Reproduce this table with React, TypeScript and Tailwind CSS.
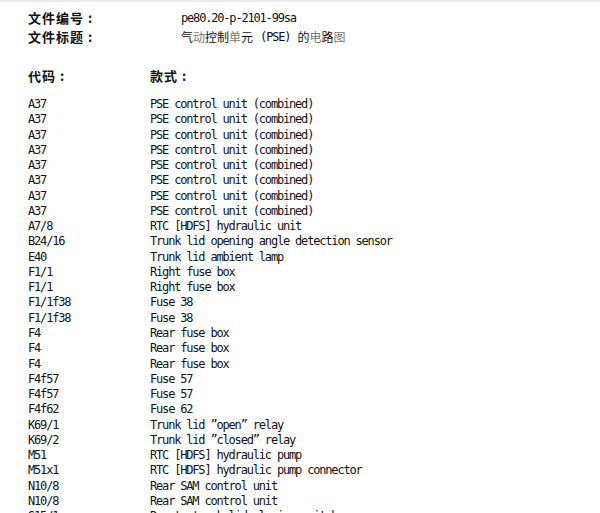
import React from "react";

const rows: [string, string][] = [
  ["A37", "PSE control unit (combined)"],
  ["A37", "PSE control unit (combined)"],
  ["A37", "PSE control unit (combined)"],
  ["A37", "PSE control unit (combined)"],
  ["A37", "PSE control unit (combined)"],
  ["A37", "PSE control unit (combined)"],
  ["A37", "PSE control unit (combined)"],
  ["A37", "PSE control unit (combined)"],
  ["A7/8", "RTC [HDFS] hydraulic unit"],
  ["B24/16", "Trunk lid opening angle detection sensor"],
  ["E40", "Trunk lid ambient lamp"],
  ["F1/1", "Right fuse box"],
  ["F1/1", "Right fuse box"],
  ["F1/1f38", "Fuse 38"],
  ["F1/1f38", "Fuse 38"],
  ["F4", "Rear fuse box"],
  ["F4", "Rear fuse box"],
  ["F4", "Rear fuse box"],
  ["F4f57", "Fuse 57"],
  ["F4f57", "Fuse 57"],
  ["F4f62", "Fuse 62"],
  ["K69/1", "Trunk lid \u201Dopen\u201D relay"],
  ["K69/2", "Trunk lid \u201Dclosed\u201D relay"],
  ["M51", "RTC [HDFS] hydraulic pump"],
  ["M51x1", "RTC [HDFS] hydraulic pump connector"],
  ["N10/8", "Rear SAM control unit"],
  ["N10/8", "Rear SAM control unit"],
  ["S15/1", "Remote trunk lid closing switch"],
];

const mono = "font-['DejaVu_Sans_Mono',monospace] text-[12px] tracking-[-1.18px]";
const cjk = "font-['Noto_Sans_CJK_SC','Noto_Sans',sans-serif]";

export default function App() {
  return (
    <div className="w-[600px] h-[513px] overflow-hidden bg-white text-[#111]">
      <div className="h-[2px] bg-[#e9e9e9]" />
      <div className="pl-[28px] pt-[6px]">
        <div className="flex items-center h-[19px]">
          <div className={`w-[153px] ${cjk} text-[13px] font-bold tracking-[1px]`}>文件编号 :</div>
          <div className={mono}>pe80.20-p-2101-99sa</div>
        </div>
        <div className="flex items-center h-[19px]">
          <div className={`w-[153px] ${cjk} text-[13px] font-bold tracking-[1px]`}>文件标题 :</div>
          <div className={`${cjk} text-[12px] flex items-center`}>
            <span>气</span>
            <span className="text-[#777]">动</span>
            <span>控制</span>
            <span className="text-[#777]">单</span>
            <span>元</span>
            <span className={`${mono} whitespace-pre ml-[1px]`}> (PSE) </span>
            <span className="ml-[1px]">的</span>
            <span className="text-[#777]">电</span>
            <span>路</span>
            <span className="text-[#777]">图</span>
          </div>
        </div>
        <div className="flex items-center h-[19px] mt-[20px]">
          <div className={`w-[122px] ${cjk} text-[13px] font-bold tracking-[1px]`}>代码 :</div>
          <div className={`${cjk} text-[13px] font-bold tracking-[1px]`}>款式 :</div>
        </div>
        <div className="mt-[12px]">
          {rows.map(([code, desc], i) => (
            <div key={i} className={`flex h-[15.27px] leading-[15.27px] ${mono} whitespace-pre`}>
              <div className="w-[122px]">{code}</div>
              <div>{desc}</div>
            </div>
          ))}
        </div>
      </div>
    </div>
  );
}
